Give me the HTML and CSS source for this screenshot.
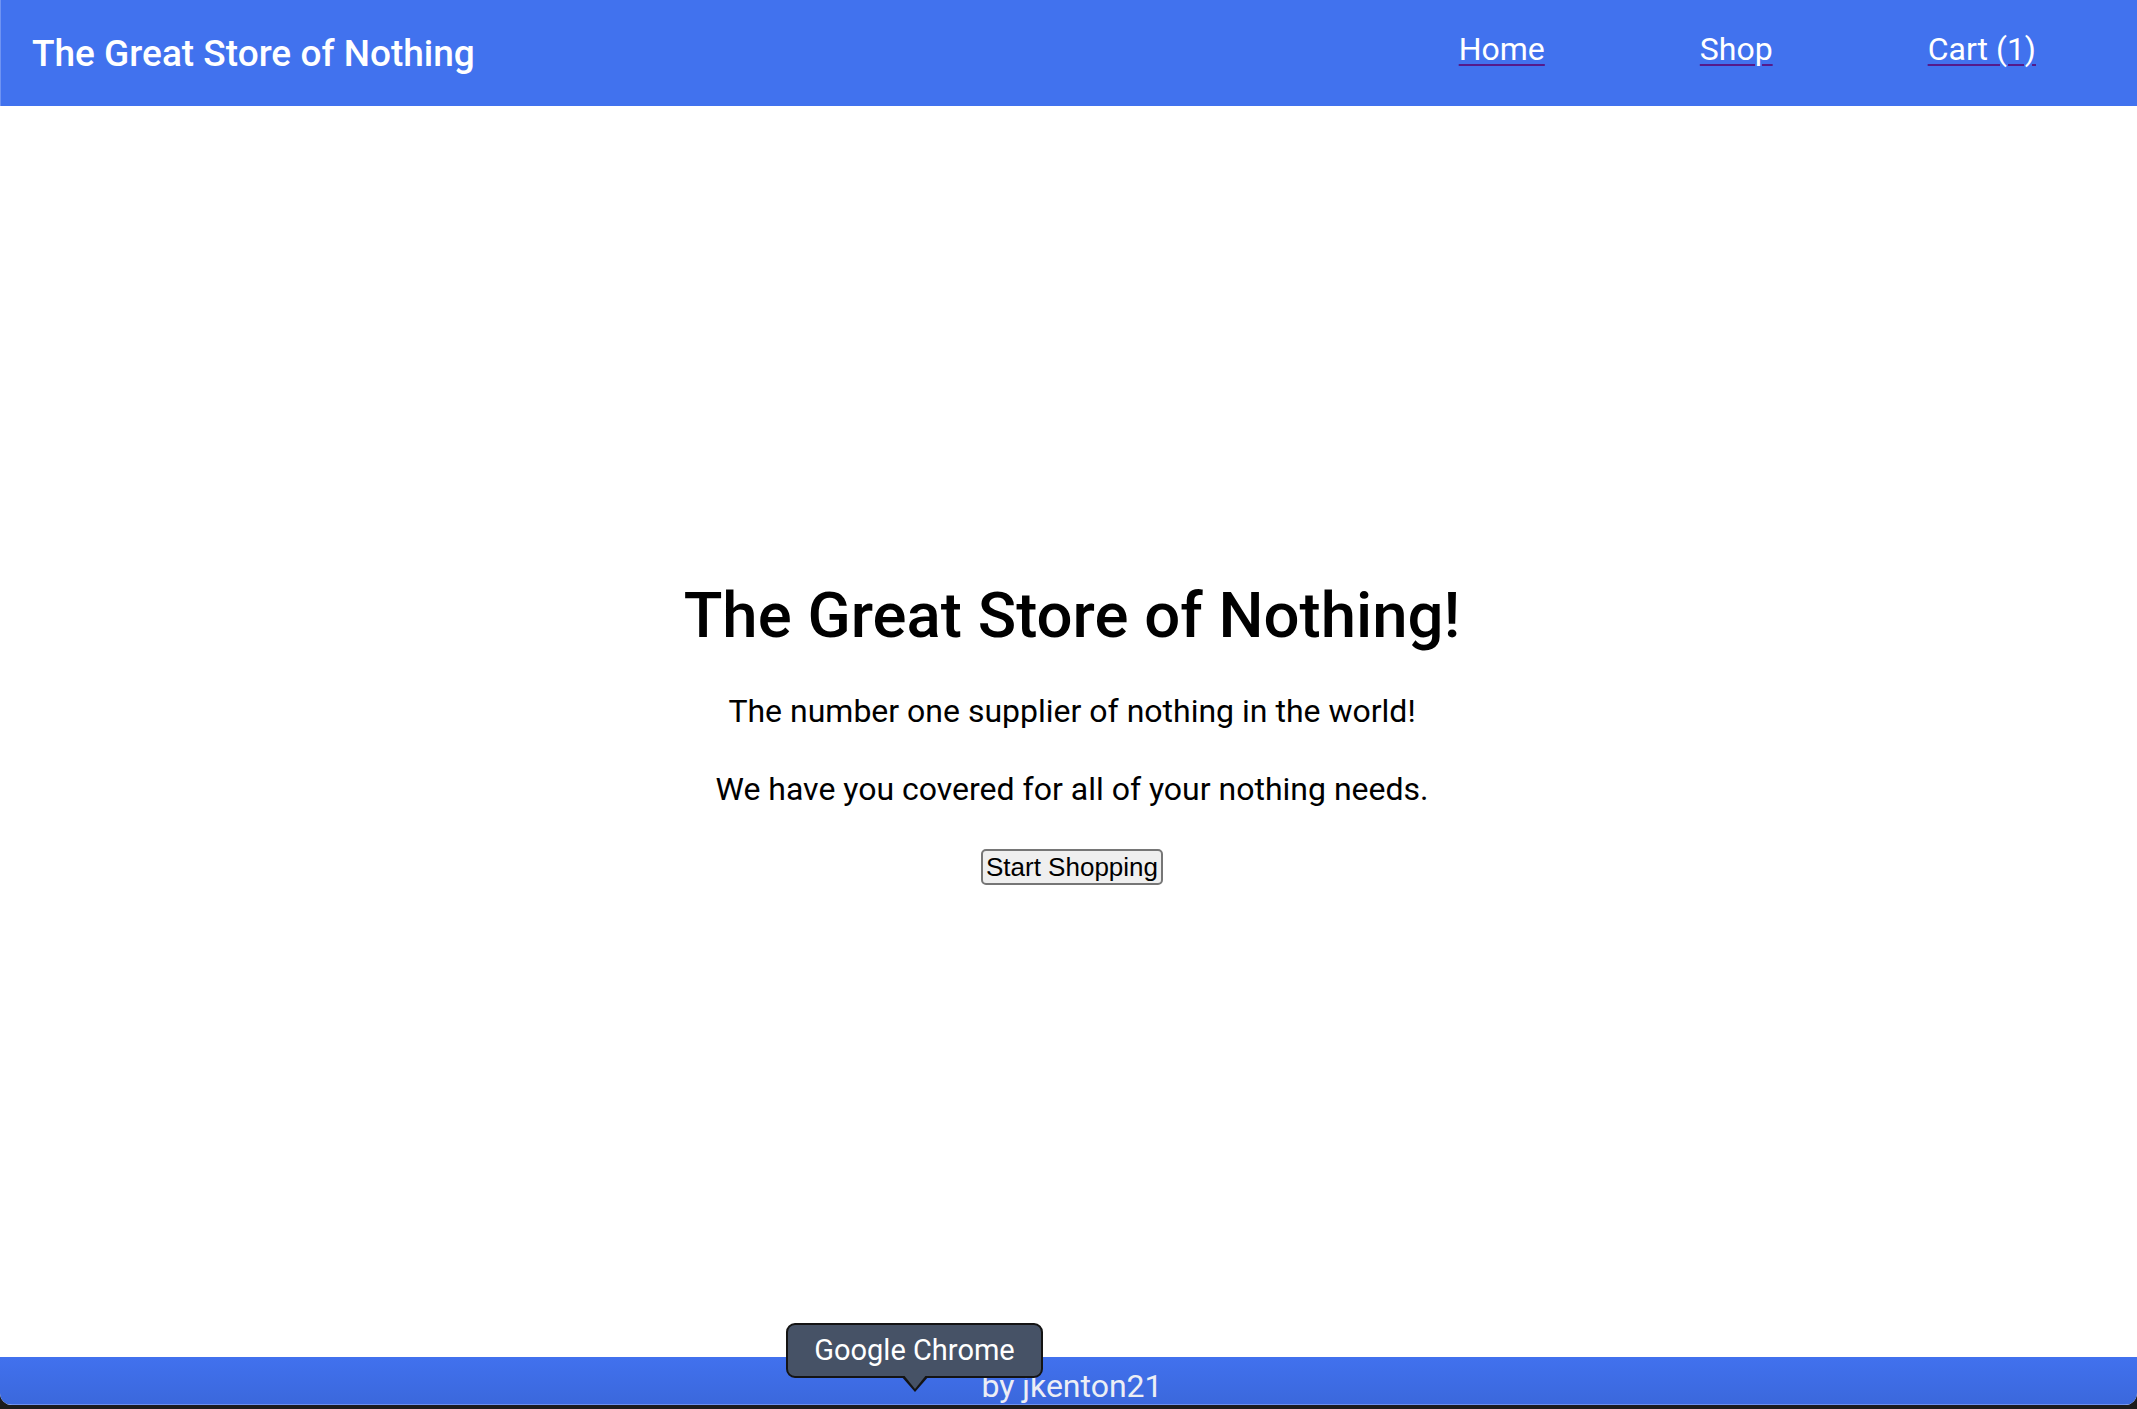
FILE: index.html
```html
<!DOCTYPE html>
<html lang="en">
<head>
<meta charset="utf-8">
<title>The Great Store of Nothing</title>
<link rel="stylesheet" href="styles.css">
</head>
<body>
<div class="window">
  <header class="topbar">
    <div class="brand">The Great Store of Nothing</div>
    <nav class="nav">
      <a href="#" class="nav-link"><span>Home</span></a>
      <a href="#" class="nav-link"><span>Shop</span></a>
      <a href="#" class="nav-link"><span>Cart (1)</span></a>
    </nav>
  </header>
  <main class="hero">
    <h1 class="hero-title">The Great Store of Nothing!</h1>
    <p class="hero-text">The number one supplier of nothing in the world!</p>
    <p class="hero-text hero-text-last">We have you covered for all of your nothing needs.</p>
    <button class="shop-btn" type="button">Start Shopping</button>
  </main>
  <footer class="footer"><span>by jkenton21</span></footer>
  <div class="tooltip">Google Chrome</div>
</div>
</body>
</html>
```
FILE: styles.css
```css
html, body {
  margin: 0;
  height: 100%;
}

body {
  background: #1b1b1d;
  font-family: Roboto, "Liberation Sans", sans-serif;
  overflow: hidden;
}

.window {
  position: relative;
  height: calc(100vh - 4px);
  display: flex;
  flex-direction: column;
  background: #ffffff;
  border-radius: 0 0 12px 12px;
  overflow: hidden;
}

.topbar {
  flex: none;
  height: 106px;
  box-sizing: border-box;
  display: flex;
  align-items: center;
  justify-content: space-between;
  padding: 0 101px 0 31px;
  background: #4172ee;
  border-left: 1px solid #6f93f2;
}

.brand {
  font-size: 37px;
  font-weight: 500;
  color: #ffffff;
  line-height: normal;
}

.nav {
  display: flex;
  gap: 155px;
  padding-bottom: 9px;
}

.nav-link {
  font-size: 32px;
  line-height: normal;
  color: #551a8b;
  text-decoration: underline;
  text-decoration-thickness: 2px;
  text-underline-offset: 4px;
}

.nav-link span {
  color: #ffffff;
}

.hero {
  flex: 1;
  display: flex;
  flex-direction: column;
  align-items: center;
  justify-content: center;
  padding-left: 7px;
  color: #000000;
}

.hero-title {
  margin: 0 0 38px;
  font-size: 63.5px;
  font-weight: 500;
  line-height: 75px;
}

.hero-text {
  margin: 0 0 37px;
  font-size: 32px;
  line-height: 41px;
}

.hero-text-last {
  margin-bottom: 39px;
}

.shop-btn {
  height: 36px;
  box-sizing: border-box;
  padding: 0 3px;
  font-family: "Liberation Sans", Arial, sans-serif;
  font-size: 26px;
  line-height: 30px;
  color: #000000;
  background: #efefef;
  border: 2px solid #767676;
  border-radius: 5px;
}

.footer {
  flex: none;
  height: 48px;
  box-sizing: border-box;
  padding: 10px 0 0 7px;
  overflow: hidden;
  text-align: center;
  font-size: 32px;
  line-height: normal;
  color: #eceef5;
  background: linear-gradient(#4171ee, #3b68dc);
  border-bottom: 1px solid #6f91f0;
}

.tooltip {
  position: absolute;
  left: 786px;
  top: 1323px;
  width: 257px;
  height: 55px;
  box-sizing: border-box;
  display: flex;
  align-items: center;
  justify-content: center;
  padding-bottom: 2px;
  font-size: 29px;
  color: #ffffff;
  background: #465266;
  border: 2px solid #141414;
  border-radius: 9px;
}

.tooltip::before,
.tooltip::after {
  content: "";
  position: absolute;
  left: 50%;
  width: 0;
  height: 0;
  border-style: solid;
  border-color: transparent;
}

.tooltip::before {
  top: 100%;
  margin-left: -14px;
  border-width: 16px 14px 0 14px;
  border-top-color: #141414;
}

.tooltip::after {
  top: calc(100% - 2px);
  margin-left: -12px;
  border-width: 15px 12px 0 12px;
  border-top-color: #465266;
}
```
